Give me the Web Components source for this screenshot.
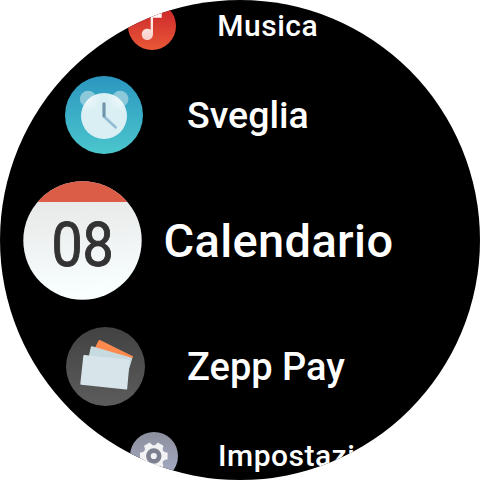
<!DOCTYPE html>
<html lang="it">
<head>
<meta charset="utf-8">
<title>App</title>
<style>
html, body { margin: 0; width: 480px; height: 480px; background: #fff; overflow: hidden; }
.far { --size: 48px; --font: 30px; --tracking: .5px; --drop: 0px; }
.near { --size: 78px; --font: 37.5px; --tracking: 0px; --drop: 2px; }
.focus { --size: 119px; --font: 47px; --tracking: .35px; --drop: 0px; }
</style>
</head>
<body>
<watch-face>
  <app-row class="far" style="--indent:128.3px;--gap:41px"><music-icon slot="icon"></music-icon>Musica</app-row>
  <app-row class="near" style="--indent:65.3px;--gap:43.7px"><alarm-icon slot="icon"></alarm-icon>Sveglia</app-row>
  <app-row class="focus" style="--indent:22.5px;--gap:22px"><calendar-icon slot="icon"></calendar-icon>Calendario</app-row>
  <app-row class="near" style="--size:79px;--font:38px;--drop:0px;--indent:65.5px;--gap:42.5px"><pay-icon slot="icon"></pay-icon>Zepp Pay</app-row>
  <app-row class="far" style="--indent:130px;--gap:40px"><settings-icon slot="icon"></settings-icon>Impostazioni</app-row>
</watch-face>
<script>
const define = (name, html) => customElements.define(name, class extends HTMLElement {
  constructor() {
    super();
    this.attachShadow({ mode: 'open' }).innerHTML = html;
  }
});

define('watch-face', `
<style>
:host { display: flex; flex-direction: column; gap: 26px; box-sizing: border-box;
  width: 480px; height: 480px; padding-top: 2px; background: #000; color: #fff;
  clip-path: circle(240px at 240px 240px); overflow: hidden;
  font-family: Roboto, "Liberation Sans", sans-serif; font-weight: 500; }
::slotted(.focus) { margin: 1px 0; }
</style><slot></slot>`);

define('app-row', `
<style>
:host { display: flex; flex: none; align-items: center; height: var(--size); gap: var(--gap);
  padding-left: var(--indent); font-size: var(--font); letter-spacing: var(--tracking);
  line-height: 1; white-space: nowrap; }
::slotted(*) { flex: none; width: var(--size); height: var(--size); }
.label { padding-top: var(--drop); }
</style><slot name="icon"></slot><span class="label"><slot></slot></span>`);

const icon = (name, size, art) => define(name, `
<style>:host { display: block; letter-spacing: 0; } svg { display: block; width: 100%; height: 100%; }</style>
<svg viewBox="0 0 ${size} ${size}">${art}</svg>`);

icon('music-icon', 48, `
<defs><linearGradient id="g" x2="0" y2="1"><stop stop-color="#c8202a"/><stop offset="1" stop-color="#e95837"/></linearGradient>
<linearGradient id="n" x2="0" y2="1"><stop stop-color="#fff"/><stop offset="1" stop-color="#f9cfc9"/></linearGradient></defs>
<circle cx="24" cy="24" r="24" fill="url(#g)"/>
<path fill="url(#n)" d="M22.7 10H33.7V15.7H25V32.3A5.7 5.7 0 1 1 22.7 27.8Z"/>`);

icon('alarm-icon', 78, `
<defs><linearGradient id="g" x2="0" y2="1"><stop stop-color="#2b96bf"/><stop offset="1" stop-color="#4bc6cd"/></linearGradient>
<radialGradient id="l" gradientUnits="userSpaceOnUse" cx="23" cy="23" r="13"><stop stop-color="#fff"/><stop offset="1" stop-color="#fff" stop-opacity="0"/></radialGradient>
<radialGradient id="r" gradientUnits="userSpaceOnUse" cx="55" cy="23" r="13"><stop stop-color="#fff"/><stop offset="1" stop-color="#fff" stop-opacity="0"/></radialGradient></defs>
<circle cx="39" cy="39" r="39" fill="url(#g)"/>
<circle cx="23.1" cy="23" r="8.3" fill="#8ac8da"/><circle cx="55.2" cy="23" r="8.3" fill="#8ac8da"/>
<circle cx="39" cy="40" r="23" fill="#d9eff4"/>
<circle cx="39" cy="40" r="23" fill="url(#l)" opacity=".6"/><circle cx="39" cy="40" r="23" fill="url(#r)" opacity=".6"/>
<path d="M39 40.5 50.6 51.3" stroke="#94bdd5" stroke-width="2.7" stroke-linecap="round"/>
<path d="M39 27.8V39.8" stroke="#7095aa" stroke-width="3.2" stroke-linecap="round"/>`);

icon('calendar-icon', 119, `
<defs><linearGradient id="g" x2=".12" y2="1"><stop offset=".15" stop-color="#e7e7e7"/><stop offset="1" stop-color="#f9ffff"/></linearGradient>
<clipPath id="c"><circle cx="59.5" cy="59.5" r="59.2"/></clipPath></defs>
<g clip-path="url(#c)"><rect width="119" height="119" fill="url(#g)"/><rect width="119" height="21" fill="#dc5d47"/></g>
<text transform="translate(59.5 85.1) scale(.9 1)" text-anchor="middle" font-size="61.5" font-weight="400" fill="#333" stroke="#333" stroke-width="1" stroke-linejoin="round">08</text>`);

icon('pay-icon', 79, `
<defs><linearGradient id="g" x2="0" y2="1"><stop stop-color="#424242"/><stop offset="1" stop-color="#5c5c5c"/></linearGradient></defs>
<circle cx="39.5" cy="39.5" r="39.5" fill="url(#g)"/>
<g stroke-linejoin="round" stroke-width="2" transform="translate(-.5 0)">
<path d="M34 14 66.5 30 62 34 30 22Z" fill="#ff8a50" stroke="#ff8a50"/>
<path d="M26.3 20.2 65.7 31.7 60 50 22 40Z" fill="#c6dadf" stroke="#c6dadf"/>
<path d="M18.8 29 63.2 33.8 60.7 61.6 15.8 56.8Z" fill="#d7e5ea" stroke="#d7e5ea"/></g>`);

icon('settings-icon', 48, `
<defs><linearGradient id="g" x2="0" y2="1"><stop stop-color="#8c8f9c"/><stop offset="1" stop-color="#a9adc9"/></linearGradient></defs>
<circle cx="24" cy="24" r="24" fill="url(#g)"/>
<g fill="#f2f2f5"><circle cx="23.8" cy="24" r="10.8"/>
<g id="t"><path d="M20.6 10.2H27L29.2 18H18.4Z" transform="rotate(30 23.8 24)"/>
<path d="M20.6 10.2H27L29.2 18H18.4Z" transform="rotate(90 23.8 24)"/>
<path d="M20.6 10.2H27L29.2 18H18.4Z" transform="rotate(150 23.8 24)"/></g>
<use href="#t" transform="rotate(180 23.8 24)"/></g>
<circle cx="23.8" cy="24" r="5.4" fill="none" stroke="#7d808f" stroke-width="4.6"/>`);
</script>
</body>
</html>
